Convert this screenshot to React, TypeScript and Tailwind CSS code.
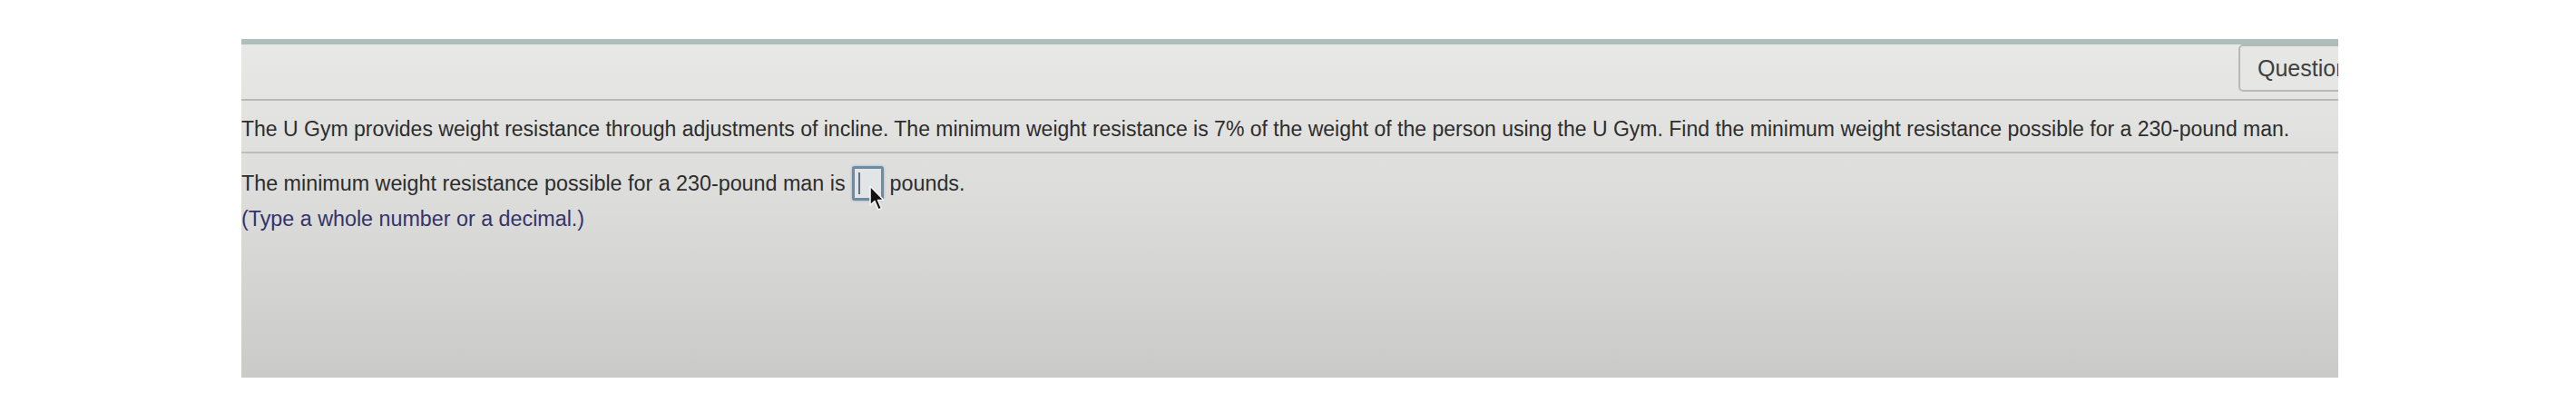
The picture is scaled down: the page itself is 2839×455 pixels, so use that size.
import React from 'react';

function MousePointer() {
  return (
    <svg
      className="absolute left-[957px] top-[204px] h-[30px] w-[20px]"
      viewBox="0 0 20 30"
    >
      <path
        d="M2 1 L2 22 L7 17.5 L11 27 L14.5 25.5 L10.5 16.5 L17 16.5 Z"
        fill="#111"
        stroke="#f2f2f2"
        strokeWidth="1.6"
        strokeLinejoin="round"
      />
    </svg>
  );
}

export default function App() {
  return (
    <div className="relative h-[455px] w-[2839px] overflow-hidden bg-white pl-[266px] pt-[43px] font-['Liberation_Sans',Arial,sans-serif]">
      {/* Question panel */}
      <div className="flex h-[373px] w-[2311px] flex-col overflow-hidden border-t-[6px] border-[#aebfbb] bg-gradient-to-b from-[#e8e8e6] via-[#dbdbd9] to-[#cacbc8]">
        {/* Header */}
        <div className="flex h-[62px] justify-end border-b-2 border-[#b9b9b7]">
          <button className="-mr-[60px] h-[52px] w-[170px] rounded-[5px] border-2 border-[#b8b8b6] bg-[#e6e6e4] pl-[19px] text-left text-[25px] leading-[48px] text-[#3f3f3f]">
            Question
          </button>
        </div>

        {/* Question text */}
        <div className="border-b-2 border-[#bdbdbb] pb-[9px] pt-[15px] text-[23px] leading-[32px] text-[#2d2d2d]">
          The U Gym provides weight resistance through adjustments of incline. The minimum weight resistance is 7% of the weight of the person using the U Gym. Find the minimum weight resistance possible for a 230-pound man.
        </div>

        {/* Answer */}
        <div className="mt-[14px] flex h-[38px] items-center text-[23.3px] text-[#2d2d2d]">
          <span>The minimum weight resistance possible for a 230-pound man is</span>
          <span className="mx-[7px] flex h-[38px] w-[35px] items-center rounded-[3px] border-[3px] border-[#6e8ba4] bg-[#e2e5e6] pl-[4px] shadow-[0_0_3px_#8fb0c8]">
            <span className="h-[24px] w-[2px] bg-[#5b728a]" />
          </span>
          <span>pounds.</span>
        </div>
        <div className="mt-[7px] text-[23.3px] leading-[26px] text-[#34336a]">
          (Type a whole number or a decimal.)
        </div>
      </div>
      <MousePointer />
    </div>
  );
}
